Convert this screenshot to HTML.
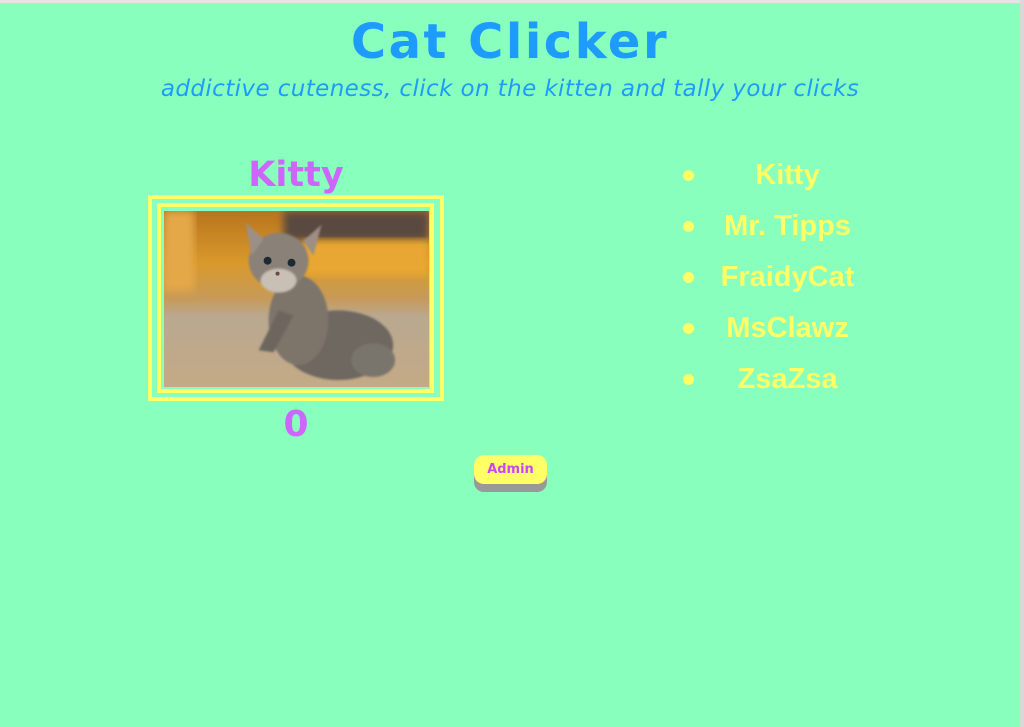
<!DOCTYPE html>
<html><head><style>
html,body{margin:0;padding:0}
body{width:1024px;height:727px;background:#88ffbc;position:relative;overflow:hidden;font-family:"DejaVu Sans",Verdana,sans-serif}
.top{position:absolute;left:0;top:0;width:1024px;height:3px;background:#e4e4e4}
.right{position:absolute;right:0;top:0;width:4px;height:727px;background:#d8d8d8}
h1{position:absolute;left:0;width:1020px;top:12px;margin:0;text-align:center;font-size:48px;letter-spacing:2.5px;font-weight:bold;color:#1e9bff;line-height:60px}
.sub{position:absolute;left:0;width:1020px;top:74px;text-align:center;font-style:italic;font-size:23px;letter-spacing:0.4px;color:#1e9bff;line-height:30px}
.name{position:absolute;left:148px;width:296px;top:153px;text-align:center;font-size:35px;font-weight:bold;color:#cc66ff;line-height:44px}
.f1{position:absolute;left:148px;top:195px;width:288px;height:198px;border:4px solid #ffff66}
.f2{position:absolute;left:157px;top:203px;width:269px;height:182px;border:4px solid #ffff66}
.img{position:absolute;left:164px;top:211px;width:265px;height:176px}
.cnt{position:absolute;left:148px;width:296px;top:402px;text-align:center;font-size:36px;font-weight:bold;color:#cc66ff;line-height:46px}
.btn{position:absolute;left:474px;top:455px;width:73px;height:29px;background:#ffff66;border-radius:10px;box-shadow:0 8px 0 #999;text-align:center;line-height:29px;font-size:13px;font-weight:bold;color:#cc44ff}
ul{position:absolute;left:680px;top:150px;margin:0;padding:0;list-style:none}
li{position:relative;width:215px;height:51px;line-height:50px;text-align:center;font-family:"Comic Sans MS","Liberation Sans",sans-serif;font-weight:bold;font-size:29px;color:#ffff66}
li:before{content:"";position:absolute;left:3px;top:20px;width:11px;height:11px;border-radius:50%;background:#ffff66}
</style></head><body>
<div class="top"></div><div class="right"></div>
<h1>Cat Clicker</h1>
<div class="sub">addictive cuteness, click on the kitten and tally your clicks</div>
<div class="name">Kitty</div>
<div class="f1"></div><div class="f2"></div>
<svg class="img" viewBox="0 0 266 177" preserveAspectRatio="none">
<defs>
<linearGradient id="bg" x1="0" y1="0" x2="0" y2="1">
<stop offset="0" stop-color="#b8741e"/><stop offset="0.3" stop-color="#d99a2c"/><stop offset="0.5" stop-color="#c79a5a"/><stop offset="0.6" stop-color="#b9a890"/><stop offset="1" stop-color="#c4aa86"/>
</linearGradient>
<filter id="b"><feGaussianBlur stdDeviation="4"/></filter>
<filter id="b2"><feGaussianBlur stdDeviation="1.2"/></filter>
</defs>
<rect width="266" height="177" fill="url(#bg)"/>
<rect x="120" y="0" width="146" height="30" fill="#5a4a40" filter="url(#b)"/>
<rect x="140" y="30" width="126" height="35" fill="#e8a730" filter="url(#b)"/>
<rect x="0" y="0" width="30" height="80" fill="#e5a848" filter="url(#b)"/>
<g filter="url(#b2)">
<ellipse cx="175" cy="135" rx="55" ry="35" fill="#6e6760"/>
<ellipse cx="210" cy="150" rx="22" ry="17" fill="#7a746c"/>
<ellipse cx="135" cy="110" rx="30" ry="45" fill="#7d756b"/>
<path d="M95 140 L115 100 L130 105 L110 142 Z" fill="#6d665f"/>
<ellipse cx="115" cy="50" rx="30" ry="28" fill="#8a8178"/>
<path d="M82 12 L100 28 L88 45 Z" fill="#9c8f86"/>
<path d="M158 14 L140 30 L150 45 Z" fill="#9c8f86"/>
<ellipse cx="115" cy="70" rx="18" ry="12" fill="#c8bfb5"/>
</g>
<circle cx="104" cy="50" r="4" fill="#1d2a33"/>
<circle cx="128" cy="52" r="4" fill="#1d2a33"/>
<circle cx="114" cy="63" r="2" fill="#6a4a44"/>
</svg>
<div class="cnt">0</div>
<div class="btn">Admin</div>
<ul><li>Kitty</li><li>Mr. Tipps</li><li>FraidyCat</li><li>MsClawz</li><li>ZsaZsa</li></ul>
</body></html>
